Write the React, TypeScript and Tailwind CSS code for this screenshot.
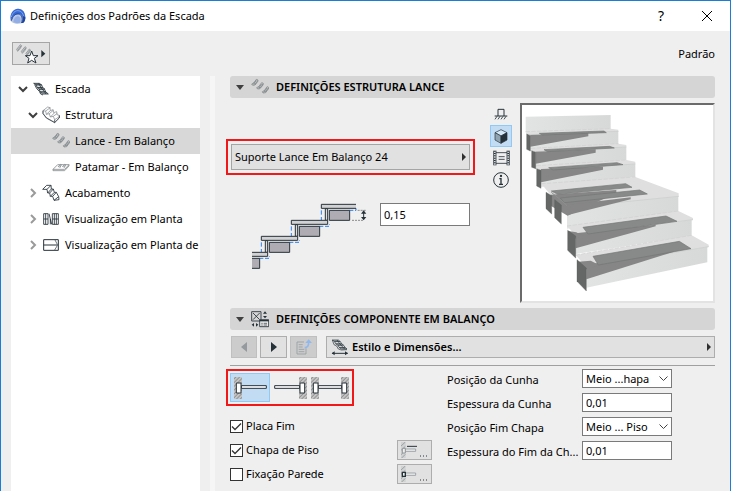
import { useState, type ReactNode } from "react";
import clsx from "clsx";

const ink = "#26323a";

function Chevron({ open }: { open?: boolean }) {
  return open ? (
    <svg width="10" height="10" viewBox="0 0 10 10" fill="none" stroke="#3f3f3f" strokeWidth="2">
      <path d="M1 3l4 4 4-4" />
    </svg>
  ) : (
    <svg width="10" height="10" viewBox="0 0 10 10" fill="none" stroke="#9a9a9a" strokeWidth="2">
      <path d="M3 1l4 4-4 4" />
    </svg>
  );
}

function Logo() {
  return (
    <svg width="16" height="16" viewBox="0 0 48 48">
      <path d="M2 38C-2 20 8 3 24 2c15 0 23 13 22 30-1 8-4 12-8 13-12 4-30 3-36-7z" fill="#b9c8e4" />
      <path d="M2 34C0 16 9 3 24 2c15 0 23 13 22 29-1 8-4 13-8 14 3-14 0-26-11-27C14 17 6 26 3 38z" fill="#3568d4" />
      <path d="M4 27C8 14 15 8 24 8c9 0 15 7 17 17" fill="none" stroke="#7ea4ee" strokeWidth="3" />
      <path d="M4 38c4-14 12-21 21-20 11 1 14 13 10 27" fill="none" stroke="#1f449e" strokeWidth="3" />
      <path d="M10 43c1-11 7-18 14-18 7 1 9 9 7 19-7 2-15 2-21-1z" fill="#93aee4" />
      <path d="M46 28c0 9-3 15-8 17h-4c4-6 6-13 4-21z" fill="#1f449e" />
    </svg>
  );
}

function StairIcon() {
  return (
    <svg width="16" height="14" viewBox="0 0 48 42" fill="#a9afb2" stroke={ink} strokeWidth="2.5" strokeLinejoin="round">
      <path d="M2 4h17l7 5H9z" />
      <path d="M9 9h17l3 8H13z" fill="#e3e6e7" />
      <path d="M13 17h17l6 5H18z" />
      <path d="M18 22h17l3 8H22z" fill="#e3e6e7" />
      <path d="M22 30h17l7 6H29z" />
      <path d="M5 8l6 12 8 8 4 8 7 3M17 4l7 13 11 13 4 6" fill="none" />
    </svg>
  );
}

function StructureIcon() {
  return (
    <svg width="18" height="18" viewBox="0 0 54 54" fill="none" stroke="#858b8e" strokeWidth="2.2" strokeLinejoin="round">
      <path d="M3 14L17 3l7 2 1 9 8-3 2 9 9-3 1 9 7 2v7L38 49 13 35 3 22z" fill="#fff" />
      <path d="M3 14l8 1 14-10M11 15l2 10 12-11M13 25l9-2 13-11M22 23l3 10 12-12M25 33l9-2 12-9M34 31l4 10 14-9" />
      <path d="M3 14v9l10 13 25 14 14-14v-8M38 41v9" stroke={ink} />
    </svg>
  );
}

function FlightIcon() {
  return (
    <svg width="18" height="18" viewBox="0 0 54 54" fill="#c9cccd" stroke="#747b7e" strokeWidth="2" strokeLinejoin="round">
      <path d="M2 18l6-3L16 4l5 2-1 5-8 10-7 1z" />
      <path d="M17 29l6-3 9-12 5 2-1 5-9 11-7 1z" />
      <path d="M34 41l6-3 8-12 5 2-1 5-8 11-8 1z" />
      <path d="M8 15l4 4 8-11M23 26l4 4 9-12M40 38l3 4 9-12M6 20l10-13M22 31l10-13M38 43l10-13" fill="none" />
    </svg>
  );
}

function LandingIcon() {
  return (
    <svg width="18" height="10" viewBox="0 0 54 30" fill="none" stroke="#858b8e" strokeWidth="2.5" strokeLinejoin="round">
      <path d="M3 22L17 8h34L38 22zM3 22v4h35l13-14V8" />
      <path d="M18 15l7-8 3 1-4 9M31 15l7-8 3 1-4 9" fill="#c8cbcc" />
    </svg>
  );
}

function FinishIcon() {
  return (
    <svg width="18" height="18" viewBox="0 0 54 54" fill="none" stroke={ink} strokeWidth="2.6" strokeLinejoin="round">
      <path d="M2 16L14 4h13L15 16zM15 16l2 11L28 15 27 4M17 27h6l11-12h-6M23 27l2 10 12-12-3-10M25 37h7l11-12h-6M32 37l4 12 14-11-7-13M36 49l15-2-1-9" />
    </svg>
  );
}

function PlanIcon() {
  return (
    <svg width="16" height="12" viewBox="0 0 48 36" fill="none" stroke={ink} strokeWidth="2.6">
      <path d="M2 2h13v32H2zM8 2v32M2 18h13M18 2l8 32M22 34V18M28 2v32h18V2zM34 2v32M40 2v32M28 18h18" />
    </svg>
  );
}

function CeilingPlanIcon() {
  return (
    <svg width="16" height="12" viewBox="0 0 48 36" fill="none" stroke={ink} strokeWidth="3">
      <path d="M2 2h44v32H2zM2 18h40" />
      <path d="M36 3l8 15-9 15" strokeWidth="2" />
    </svg>
  );
}

function ComponentIcon() {
  return (
    <svg width="18" height="17" viewBox="0 0 54 51" fill="none" stroke={ink} strokeWidth="2.6">
      <path d="M2 2h28v28H2zM6 6l20 20M26 6L6 26" />
      <path d="M26 26h27v21H26z" fill="#e8e8e8" />
      <path d="M26 29h27" strokeWidth="4" />
      <path d="M31 37h4M38 37h10M31 42h4M38 42h10" strokeWidth="2" />
      <path d="M36 8l6-7 6 7zM36 15l6 7 6-7zM9 36l-7 5 7 6zM15 36l7 5-7 6z" fill={ink} stroke="none" />
    </svg>
  );
}

function StyleIcon() {
  return (
    <svg width="18" height="17" viewBox="0 0 54 51" fill="none" stroke={ink} strokeWidth="2" strokeLinejoin="round">
      <path d="M4 3h18l6 5H11zM14 14h18l6 5H21zM24 25h18l6 5H31z" fill="#a9afb2" />
      <path d="M11 8h17l4 6H14zM21 19h17l4 6H24z" fill="#eef0f0" />
      <path d="M4 3l5 14 8 4 5 9 9 3 17-1M18 3l8 11 10 11 5 5" />
      <path d="M3 43h47" strokeWidth="3" />
      <path d="M2 43l9-6v12zM51 43l-9-6v12z" fill={ink} stroke="none" />
    </svg>
  );
}

function SelectTriangle() {
  return <span className="h-0 w-0 border-y-4 border-l-4 border-y-transparent border-l-[#303030]" />;
}

const tree = [
  { label: "Escada", indent: "pl-[7px]", icon: <StairIcon />, open: true },
  { label: "Estrutura", indent: "pl-[17px]", icon: <StructureIcon />, open: true },
  { label: "Lance - Em Balanço", indent: "pl-[27px]", icon: <FlightIcon />, selected: true, leaf: true },
  { label: "Patamar - Em Balanço", indent: "pl-[27px]", icon: <LandingIcon />, leaf: true },
  { label: "Acabamento", indent: "pl-[17px]", icon: <FinishIcon /> },
  { label: "Visualização em Planta", indent: "pl-[17px]", icon: <PlanIcon /> },
  { label: "Visualização em Planta de", indent: "pl-[17px]", icon: <CeilingPlanIcon /> },
];

function SectionHeader({ title, icon }: { title: string; icon: ReactNode }) {
  return (
    <h2 className="ml-1">
      <button className="flex h-[22px] w-full items-center rounded-[3px] bg-[#d5d5d5] pl-1.5 text-left font-semibold">
        <span className="border-x-4 border-t-[5px] border-x-transparent border-t-[#404040]" />
        <span className="ml-[7px] flex w-[18px] justify-center">{icon}</span>
        <span className="ml-[7px]">{title}</span>
      </button>
    </h2>
  );
}

function StairSection() {
  const steps = [
    { x: 244, y: 43 },
    { x: 154, y: 91 },
    { x: 64, y: 139 },
    { x: -26, y: 187 },
  ];
  return (
    <svg width="115" height="67" viewBox="36 39 345 201" fill="none" strokeWidth="3">
      {steps.map(({ x, y }) => (
        <g key={y}>
          <path d={`M${x} ${y + 18}v30`} stroke="#2d7ff0" strokeDasharray="13 7" />
          <path d={`M${x + 84} ${y + 18}h${x === 244 ? 20 : 30}v-6`} stroke="#2d7ff0" strokeDasharray="12 5" />
          <path d={`M${x + 12} ${y + 13}h7v35h-7z`} stroke={ink} fill="#dcdcdc" />
          <path d={`M${x + 24} ${y + 18}h61v30h-61z`} stroke={ink} fill="#afadb3" />
          <path d={x === 244 ? "M348 43H244v12h104" : `M${x} ${y}h109v12h-109z`} stroke={ink} fill="#d2d2d2" />
        </g>
      ))}
      <path d="M353 61h26M336 91h36" stroke="#777" strokeWidth="2.5" strokeDasharray="6 3" />
      <path d="M371 66v20" stroke={ink} />
      <path d="M371 61l8 10h-16zM371 91l8-10h-16z" fill={ink} />
    </svg>
  );
}

function StairPreview() {
  return (
    <svg className="block" width="191" height="196" viewBox="19 14 573 588" role="img" aria-label="Pré-visualização 3D">
      <defs>
        <linearGradient id="riser" x1="0" x2="1">
          <stop offset="0" stopColor="#e2e4e3" />
          <stop offset="1" stopColor="#d7d9d8" />
        </linearGradient>
      </defs>
      <g fill="url(#riser)">
        <path d="M30 49L285 44V88L30 97z" />
        <path d="M42 100L308 92V131L42 153z" />
        <path d="M58 150L332 139V180L58 207z" />
        <path d="M74 201L359 190V230L74 260z" />
        <path d="M154 315L488 286V334L154 385z" />
        <path d="M176 400L528 358V406L176 462z" />
        <path d="M212 500L575 439V486L212 562z" />
      </g>
      <g fill="#dedfde">
        <path d="M30 94L285 85 308 88 308 94 40 103z" />
        <path d="M46 144L308 130 332 134V141L55 154z" />
        <path d="M62 196L332 179 359 184V192L72 209z" />
        <path d="M77 250L359 230 489 279V289L154 322 120 302z" />
        <path d="M154 377L488 332 532 353V359L176 401z" />
        <path d="M180 464L528 405 579 433V440L212 501z" />
      </g>
      <g fill="none" stroke="#c9cbca" strokeWidth="2">
        <path d="M40 103L308 93M55 154L332 140M72 209L359 191M154 322L489 288M176 401L532 358M212 501L579 439" />
        <path d="M30 94L285 85M46 144L308 130M62 196L332 179M77 250L359 230M154 377L488 332M180 464L528 405" strokeDasharray="13 4" stroke="#cecfce" />
      </g>
      <g fill="#858685">
        <path d="M44 104L218 97V108L44 139z" />
        <path d="M60 154L240 147V157L60 190z" />
        <path d="M76 206L262 199V208L76 246z" />
        <path d="M105 283L302 269V278L156 346 105 316z" />
        <path d="M154 314L345 291V297L154 345 130 322z" />
        <path d="M180 399L420 373V378L180 444z" />
        <path d="M212 494L475 447V454L212 537z" />
        <path d="M158 392L182 396 205 408 180 415z" />
        <path d="M187 484L225 481 252 495 212 507z" />
      </g>
      <g fill="#888a89" stroke="#747675" strokeWidth="2">
        <path d="M71 99L265 92 272 97 80 104z" />
        <path d="M85 148L282 138 296 143 96 154z" />
        <path d="M99 202L304 187 322 193 112 209z" />
        <path d="M107 272L330 250 349 261 126 282z" />
        <path d="M134 293L372 269 395 281 146 307z" />
        <path d="M202 381L451 347 484 363 217 401z" />
        <path d="M232 468L491 423 526 445 248 494z" />
      </g>
      <g fill="#656666" stroke="#565757" strokeWidth="1">
        <path d="M33 100L44 106V152L33 147z" />
        <path d="M48 151L60 156V205L48 201z" />
        <path d="M63 205L76 210V264L63 257z" />
        <path d="M91 276L108 286V341L91 325z" />
        <path d="M117 298L137 314V371L117 352z" />
        <path d="M156 390L180 407V473L156 450z" />
        <path d="M184 478L212 503V572L184 543z" />
      </g>
      <path d="M107 276l32 26 15 14" fill="none" stroke="#8e908f" strokeWidth="3" />
    </svg>
  );
}

function ViewIcon({ kind }: { kind: string }) {
  if (kind === "Planta")
    return (
      <svg width="14" height="12" viewBox="0 0 42 36" fill="none" stroke={ink} strokeWidth="3">
        <path d="M2 24h38M12 24V4h18v20" />
        <path d="M3 34l6-9M12 34l6-9M21 34l6-9M30 34l6-9" strokeWidth="2.5" />
      </svg>
    );
  if (kind === "3D")
    return (
      <svg width="14" height="15" viewBox="0 0 42 45" stroke={ink} strokeWidth="2" strokeLinejoin="round">
        <path d="M21 2l18 9-18 10L3 11z" fill="#d5e8f7" />
        <path d="M3 11l18 10v22L3 33z" fill="#90a3b0" />
        <path d="M39 11L21 21v22l18-10z" fill={ink} />
      </svg>
    );
  if (kind === "Filme")
    return (
      <svg width="17" height="16" viewBox="0 0 51 48" fill="none" stroke={ink} strokeWidth="2.5">
        <path d="M2 2v44M9 2v44M42 2v44M49 2v44M9 8h33M9 40h33M17 20h18M17 28h18" />
        <path d="M5.500 2v44M45.500 2v44" strokeWidth="5" strokeDasharray="3 4" />
      </svg>
    );
  return (
    <svg width="16" height="16" viewBox="0 0 48 48" fill="none" stroke={ink} strokeWidth="3">
      <circle cx="24" cy="24" r="22" />
      <circle cx="24" cy="12" r="3.500" fill={ink} stroke="none" />
      <path d="M19 20h5v17M18 37h12" strokeWidth="4" />
    </svg>
  );
}

function WallFixing({ side }: { side: string }) {
  const left = side !== "right";
  const right = side !== "left";
  const both = left && right;
  return (
    <svg
      width={both ? 38 : 33}
      height="22"
      viewBox={both ? "0 0 114 66" : left ? "0 0 99 66" : "15 0 99 66"}
      fill="#fff"
      stroke={ink}
      strokeWidth="3"
    >
      <defs>
        <pattern id={`hatch-${side}`} width="8" height="8" patternUnits="userSpaceOnUse" patternTransform="rotate(45)">
          <path d="M0 0h8v8H0z" fill="#d6d6d6" stroke="none" />
          <path d="M4 0v8" stroke="#909090" strokeWidth="4" />
        </pattern>
      </defs>
      {left && <path d="M0 0h24v66H0z" fill={`url(#hatch-${side})`} stroke="none" />}
      {right && <path d="M90 0h24v66H90z" fill={`url(#hatch-${side})`} stroke="none" />}
      <path d={both ? "M22 26h70v8H22z" : left ? "M22 26h75v8H22z" : "M17 26h75v8H17z"} />
      {left && <path d="M7 18h14v30H7z" />}
      {right && <path d="M93 18h14v30H93z" />}
    </svg>
  );
}

function MaterialIcon({ plate }: { plate?: boolean }) {
  return (
    <svg width="27" height="16" viewBox="0 0 81 48" fill="#eee" stroke="#92979a" strokeWidth="3">
      <path d="M0 0h14v48H0z" fill="#cfd1d2" stroke="none" />
      <path d="M0 12L13 0M0 25l13-12M0 38l13-12M2 48l11-11" strokeWidth="2.5" />
      <path d="M12 21h32v7H12z" strokeWidth="2.500" />
      {plate ? <path d="M4 19h9v14H4z" /> : <path d="M4 19h9v12H4z" stroke={ink} strokeWidth="4" />}
      {plate && <path d="M18 13h30" stroke={ink} />}
      <path d="M57 42h3M66 42h3M75 42h3" stroke={ink} />
    </svg>
  );
}

function CheckRow({ label, defaultChecked, action }: { label: string; defaultChecked?: boolean; action?: ReactNode }) {
  return (
    <div className="flex h-6 items-center justify-between">
      <label className="flex items-center gap-[3px]">
        <span className="relative block h-[13px] w-[13px]">
          <input
            type="checkbox"
            defaultChecked={defaultChecked}
            className="peer block h-full w-full appearance-none border border-[#333] bg-white"
          />
          <svg
            className="pointer-events-none absolute inset-0 hidden peer-checked:block"
            viewBox="0 0 13 13"
            fill="none"
            stroke="#333"
            strokeWidth="1.3"
          >
            <path d="M2 6.500l3 3 6-6" />
          </svg>
        </span>
        {label}
      </label>
      {action && (
        <button aria-label={`Material: ${label}`} className="flex h-5 w-[35px] items-center justify-center border border-[#adadad] bg-[#e1e1e1]">
          {action}
        </button>
      )}
    </div>
  );
}

const fields = [
  { id: "wedge-position", label: "Posição da Cunha", value: "Meio ...hapa", select: true },
  { id: "wedge-thickness", label: "Espessura da Cunha", value: "0,01" },
  { id: "end-position", label: "Posição Fim Chapa", value: "Meio ... Piso", select: true },
  { id: "end-thickness", label: "Espessura do Fim da Ch...", value: "0,01" },
];

export default function App() {
  const [view, setView] = useState("3D");
  const [fixing, setFixing] = useState("left");

  return (
    <div className="flex min-h-screen flex-col border-x border-t border-[#1a7fd4] bg-[#efefef] font-['Noto_Sans','Open_Sans',sans-serif] text-[11px] leading-4 text-black">
      <header className="flex h-[30px] shrink-0 items-center bg-white pl-[9px]">
        <Logo />
        <h1 className="ml-1 grow">Definições dos Padrões da Escada</h1>
        <button className="h-full w-[46px] text-sm">?</button>
        <button aria-label="Fechar" className="flex h-full w-[46px] items-center justify-center">
          <svg width="10" height="10" viewBox="0 0 10 10" stroke="#000">
            <path d="M0 0l10 10M10 0L0 10" />
          </svg>
        </button>
      </header>

      <div className="flex h-[45px] shrink-0 items-center justify-between pr-[15px] pl-[11px]">
        <button aria-label="Favoritos" className="flex h-[23px] w-[38px] items-center justify-center border border-[#a5a5a5] bg-[#e1e1e1]">
          <svg width="30" height="20" viewBox="0 0 90 60" fill="#c9cccd" stroke="#7d8386" strokeWidth="2">
            <path d="M2 16L13 2l4 3-4 8-8 9zM16 22L27 8l4 3-4 8-8 9zM30 28l10-13 4 3-4 8-7 8z" />
            <path d="M6 18l9-12M20 24l9-12M34 30l8-12" />
            <path d="M47 21l5 14h14L55 43l5 14-13-8-12 8 4-14-11-8h14z" fill="#fff" stroke={ink} strokeWidth="3" />
            <path d="M76 18l12 11-12 11z" fill={ink} stroke="none" />
          </svg>
        </button>
        <span>Padrão</span>
      </div>

      <div className="flex grow">
        <nav className="ml-[10px] w-[189px] shrink-0 overflow-hidden bg-white">
          <ul>
            {tree.map((item) => (
              <li key={item.label}>
                <button
                  className={clsx(
                    "flex h-[26px] w-full items-center pr-[3px] text-left",
                    item.indent,
                    item.selected && "bg-[#d8d8d8]",
                  )}
                >
                  <span className="flex w-[10px] shrink-0">{!item.leaf && <Chevron open={item.open} />}</span>
                  <span className="ml-1 flex w-[18px] shrink-0 justify-center">{item.icon}</span>
                  <span className="ml-[5px] whitespace-nowrap">{item.label}</span>
                </button>
              </li>
            ))}
          </ul>
        </nav>
        <div className="ml-[10px] w-[5px] shrink-0 bg-[#f6f6f6]" />

        <main className="mr-[15px] ml-[11px] min-w-0 grow">
          <SectionHeader title="DEFINIÇÕES ESTRUTURA LANCE" icon={<FlightIcon />} />

          <div className="flex h-[210px] pt-[5px]">
            <div className="grow pt-9">
              <div className="border-2 border-[#f01818] p-[3px]">
                <button className="flex h-[26px] w-full items-center justify-between border border-[#a5a5a5] bg-[#e1e1e1] pr-[3px] pl-[3px]">
                  Suporte Lance Em Balanço 24
                  <SelectTriangle />
                </button>
              </div>
              <div className="mt-7 flex items-start pl-[26px]">
                <StairSection />
                <input
                  aria-label="Espessura do suporte"
                  defaultValue="0,15"
                  className="ml-[13px] h-[23px] w-[90px] border border-[#7a7a7a] bg-white px-[3px]"
                />
              </div>
            </div>
            <div className="mr-2 ml-[15px] flex flex-col">
              {["Planta", "3D", "Filme", "Informação"].map((kind) => (
                <button
                  key={kind}
                  aria-label={kind}
                  aria-pressed={view === kind}
                  onClick={() => setView(kind)}
                  className={clsx(
                    "flex h-[22px] w-[22px] items-center justify-center border",
                    view === kind ? "border-[#90c8f6] bg-[#c2ddf3]" : "border-transparent",
                  )}
                >
                  <ViewIcon kind={kind} />
                </button>
              ))}
            </div>
            <div className="h-[200px] w-[195px] shrink-0 border-2 border-t-[#6b6b6b] border-r-[#e3e3e3] border-b-[#e3e3e3] border-l-[#6b6b6b] bg-white">
              <StairPreview />
            </div>
          </div>

          <SectionHeader title="DEFINIÇÕES COMPONENTE EM BALANÇO" icon={<ComponentIcon />} />

          <div className="mt-1.5 ml-[5px] flex h-[22px] gap-[3px]">
            <button aria-label="Anterior" disabled className="flex w-[26px] items-center justify-center border border-[#bfbfbf] bg-[#cccccc]">
              <span className="border-y-[5px] border-r-[6px] border-y-transparent border-r-[#949a9e]" />
            </button>
            <button aria-label="Próximo" className="flex w-[27px] items-center justify-center border border-[#adadad] bg-[#e1e1e1]">
              <span className="border-y-[5px] border-l-[6px] border-y-transparent border-l-[#26323a]" />
            </button>
            <button aria-label="Copiar" disabled className="flex w-[27px] items-center justify-center border border-[#bfbfbf] bg-[#cccccc]">
              <svg width="16" height="16" viewBox="0 0 48 48" fill="none" stroke="#969da1" strokeWidth="2.5">
                <path d="M24 9H3v36h27V28M8 17h12M8 24h12M8 31h17M8 38h17" />
                <path d="M26 26c10 0 12-6 12-16" stroke="#90b8ee" strokeWidth="5" />
                <path d="M28 12L38 1l10 11z" fill="#90b8ee" stroke="none" />
              </svg>
            </button>
            <button className="ml-1.5 flex grow items-center border border-[#adadad] bg-[#e1e1e1] pr-[3px] pl-1 font-semibold">
              <StyleIcon />
              <span className="ml-[3px] grow text-left">Estilo e Dimensões...</span>
              <SelectTriangle />
            </button>
          </div>

          <hr className="mt-[7px] ml-1 border-[#a0a0a0]" />

          <div className="flex pt-[3px]">
            <div className="w-[206px] shrink-0">
              <div className="flex h-[37px] w-32 items-center border-2 border-[#f01818] px-[2px]">
                {["left", "right", "both"].map((side) => (
                  <button
                    key={side}
                    aria-label={side}
                    aria-pressed={fixing === side}
                    onClick={() => setFixing(side)}
                    className={clsx(
                      "flex h-[29px] w-10 shrink-0 items-center justify-center border",
                      fixing === side ? "border-[#90c8f6] bg-[#c2ddf3]" : "border-transparent",
                    )}
                  >
                    <WallFixing side={side} />
                  </button>
                ))}
              </div>
              <div className="mt-2 ml-1">
                <CheckRow label="Placa Fim" defaultChecked />
                <CheckRow label="Chapa de Piso" defaultChecked action={<MaterialIcon plate />} />
                <CheckRow label="Fixação Parede" action={<MaterialIcon />} />
              </div>
            </div>

            <div className="ml-[15px] flex flex-col gap-[5px]">
              {fields.map((field) => (
                <div key={field.id} className="flex h-[19px] items-center">
                  <label htmlFor={field.id} className="w-[135px] pt-0.5 whitespace-nowrap">
                    {field.label}
                  </label>
                  {field.select ? (
                    <span className="relative block">
                      <select id={field.id} className="block h-[19px] w-[90px] appearance-none border border-[#7a7a7a] bg-white px-[3px]">
                        <option>{field.value}</option>
                      </select>
                      <svg
                        className="pointer-events-none absolute top-[6px] right-1"
                        width="9"
                        height="7"
                        viewBox="0 0 9 7"
                        fill="none"
                        stroke="#444"
                      >
                        <path d="M0.500 1.500l4 4 4-4" />
                      </svg>
                    </span>
                  ) : (
                    <input id={field.id} defaultValue={field.value} className="h-[19px] w-[90px] border border-[#7a7a7a] bg-white px-[3px]" />
                  )}
                </div>
              ))}
            </div>
          </div>
        </main>
      </div>
    </div>
  );
}
